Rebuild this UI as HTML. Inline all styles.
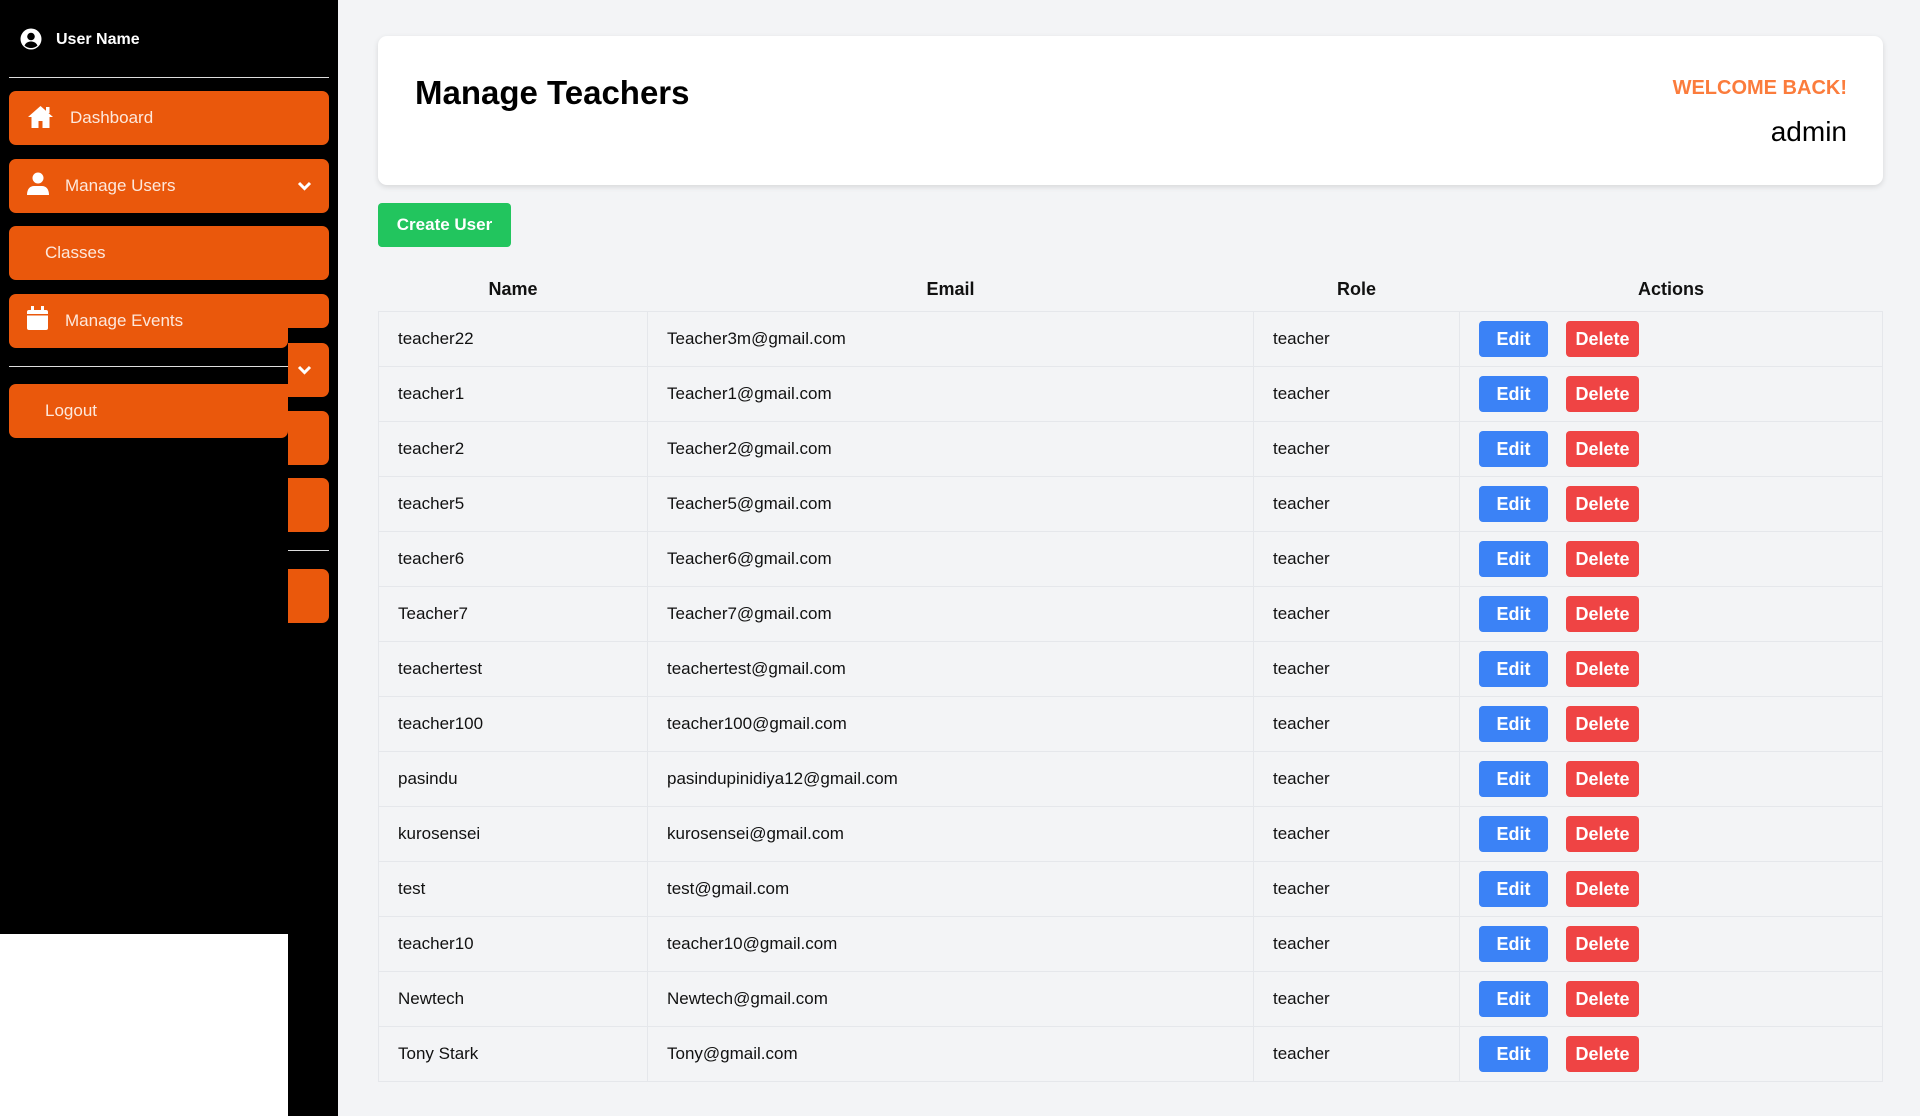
<!DOCTYPE html>
<html><head><meta charset="utf-8"><style>
*{box-sizing:border-box;margin:0;padding:0}
body{width:1920px;height:1116px;background:#f3f4f6;font-family:"Liberation Sans",sans-serif;position:relative;overflow:hidden;color:#111}
.sb{position:absolute;left:0;top:0;width:338px;height:1116px;background:#000}
.white{position:absolute;left:0;top:934px;width:288px;height:182px;background:#fff}
.btn{position:absolute;background:#ea580c;border-radius:7px;color:#fde8dc;font-size:17px}
.btn span{position:absolute;top:50%;transform:translateY(-50%)}
.hr{position:absolute;height:1px;background:#ddd}
.card{position:absolute;left:378px;top:36px;width:1505px;height:149px;background:#fff;border-radius:9px;box-shadow:0 2px 6px rgba(0,0,0,.12)}
table{position:absolute;left:378px;top:268px;width:1505px;border-collapse:collapse;font-size:17px}
th{height:43px;font-weight:bold;font-size:18px;text-align:center}
td{height:55px;border:1px solid #e5e7eb;padding-left:19px}
.e,.d{display:inline-block;height:36px;line-height:36px;color:#fff;font-weight:bold;font-size:18px;text-align:center;border-radius:4px;vertical-align:middle}
.e{background:#3b82f6;width:69px}
.d{background:#ef4444;width:73px;margin-left:18px}
</style></head><body>
<div class="sb">
<svg style="position:absolute;left:20px;top:28px" width="22" height="22" viewBox="0 0 22 22"><circle cx="11" cy="11" r="10.5" fill="#fff"/><circle cx="11" cy="8.5" r="3.8" fill="#000"/><path d="M4.5 17.5c1.5-3 4-4 6.5-4s5 1 6.5 4c-1.8 1.7-4 2.5-6.5 2.5s-4.7-.8-6.5-2.5z" fill="#000"/></svg>
<div style="position:absolute;left:56px;top:31px;color:#fff;font-weight:bold;font-size:16px">User Name</div>
<div class="hr" style="left:9px;top:77px;width:320px"></div>
<div class="btn" style="left:9px;top:91px;width:320px;height:54px">
<svg style="position:absolute;left:18px;top:14px" width="27" height="24" viewBox="0 0 27 24"><path d="M13.5 1L1 12h3.5v11h7v-7h4v7h7V12H26z" fill="#fff"/><rect x="19" y="2" width="3.5" height="6" fill="#fff"/></svg>
<span style="left:61px">Dashboard</span></div>
<div class="btn" style="left:9px;top:159px;width:320px;height:54px">
<svg style="position:absolute;left:18px;top:13px" width="22" height="24" viewBox="0 0 22 24"><circle cx="11" cy="6" r="5.5" fill="#fff"/><path d="M0 23c0-6 3-9 7-9h8c4 0 7 3 7 9z" fill="#fff"/></svg>
<span style="left:56px">Manage Users</span>
<svg style="position:absolute;left:288px;top:22px" width="15" height="10" viewBox="0 0 15 10"><path d="M2 2l5.5 5.5L13 2" stroke="#fff" stroke-width="3" fill="none"/></svg></div>
<div class="btn" style="left:9px;top:226px;width:320px;height:54px"><span style="left:36px">Classes</span></div>
<div class="btn" style="left:279px;top:294px;width:50px;height:34px"></div>
<div class="btn" style="left:9px;top:294px;width:279px;height:54px;border-radius:7px 0 7px 7px">
<svg style="position:absolute;left:18px;top:12px" width="21" height="24" viewBox="0 0 21 24"><rect x="0" y="4" width="21" height="20" rx="2" fill="#fff"/><rect x="4" y="0" width="3" height="6" fill="#fff"/><rect x="14" y="0" width="3" height="6" fill="#fff"/><rect x="0" y="8" width="21" height="1.5" fill="#ea580c"/></svg>
<span style="left:56px">Manage Events</span></div>
<div class="hr" style="left:9px;top:366px;width:279px"></div>
<div class="btn" style="left:9px;top:384px;width:279px;height:54px;border-radius:7px 0 7px 7px"><span style="left:36px">Logout</span></div>
<div class="btn" style="left:288px;top:343px;width:41px;height:54px;border-radius:0 7px 7px 0">
<svg style="position:absolute;left:9px;top:22px" width="15" height="10" viewBox="0 0 15 10"><path d="M2 2l5.5 5.5L13 2" stroke="#fff" stroke-width="3" fill="none"/></svg></div>
<div class="btn" style="left:288px;top:411px;width:41px;height:54px;border-radius:0 7px 7px 0"></div>
<div class="btn" style="left:288px;top:478px;width:41px;height:54px;border-radius:0 7px 7px 0"></div>
<div class="hr" style="left:288px;top:550px;width:41px"></div>
<div class="btn" style="left:288px;top:569px;width:41px;height:54px;border-radius:0 7px 7px 0"></div>
</div>
<div class="white"></div>
<div class="card">
<div style="position:absolute;left:37px;top:38px;font-size:33px;font-weight:bold;color:#000">Manage Teachers</div>
<div style="position:absolute;right:36px;top:41px;font-size:20px;font-weight:bold;color:#fb7c3c">WELCOME BACK!</div>
<div style="position:absolute;right:36px;top:80px;font-size:28px;color:#000">admin</div>
</div>
<div style="position:absolute;left:378px;top:203px;width:133px;height:44px;background:#22c55e;border-radius:4px;color:#fff;font-weight:bold;font-size:17px;line-height:44px;text-align:center">Create User</div>
<table>
<tr><th style="width:269px">Name</th><th style="width:606px">Email</th><th style="width:206px">Role</th><th>Actions</th></tr>
<tr><td>teacher22</td><td>Teacher3m@gmail.com</td><td>teacher</td><td><span class="e">Edit</span><span class="d">Delete</span></td></tr>
<tr><td>teacher1</td><td>Teacher1@gmail.com</td><td>teacher</td><td><span class="e">Edit</span><span class="d">Delete</span></td></tr>
<tr><td>teacher2</td><td>Teacher2@gmail.com</td><td>teacher</td><td><span class="e">Edit</span><span class="d">Delete</span></td></tr>
<tr><td>teacher5</td><td>Teacher5@gmail.com</td><td>teacher</td><td><span class="e">Edit</span><span class="d">Delete</span></td></tr>
<tr><td>teacher6</td><td>Teacher6@gmail.com</td><td>teacher</td><td><span class="e">Edit</span><span class="d">Delete</span></td></tr>
<tr><td>Teacher7</td><td>Teacher7@gmail.com</td><td>teacher</td><td><span class="e">Edit</span><span class="d">Delete</span></td></tr>
<tr><td>teachertest</td><td>teachertest@gmail.com</td><td>teacher</td><td><span class="e">Edit</span><span class="d">Delete</span></td></tr>
<tr><td>teacher100</td><td>teacher100@gmail.com</td><td>teacher</td><td><span class="e">Edit</span><span class="d">Delete</span></td></tr>
<tr><td>pasindu</td><td>pasindupinidiya12@gmail.com</td><td>teacher</td><td><span class="e">Edit</span><span class="d">Delete</span></td></tr>
<tr><td>kurosensei</td><td>kurosensei@gmail.com</td><td>teacher</td><td><span class="e">Edit</span><span class="d">Delete</span></td></tr>
<tr><td>test</td><td>test@gmail.com</td><td>teacher</td><td><span class="e">Edit</span><span class="d">Delete</span></td></tr>
<tr><td>teacher10</td><td>teacher10@gmail.com</td><td>teacher</td><td><span class="e">Edit</span><span class="d">Delete</span></td></tr>
<tr><td>Newtech</td><td>Newtech@gmail.com</td><td>teacher</td><td><span class="e">Edit</span><span class="d">Delete</span></td></tr>
<tr><td>Tony Stark</td><td>Tony@gmail.com</td><td>teacher</td><td><span class="e">Edit</span><span class="d">Delete</span></td></tr>
</table>
</body></html>
